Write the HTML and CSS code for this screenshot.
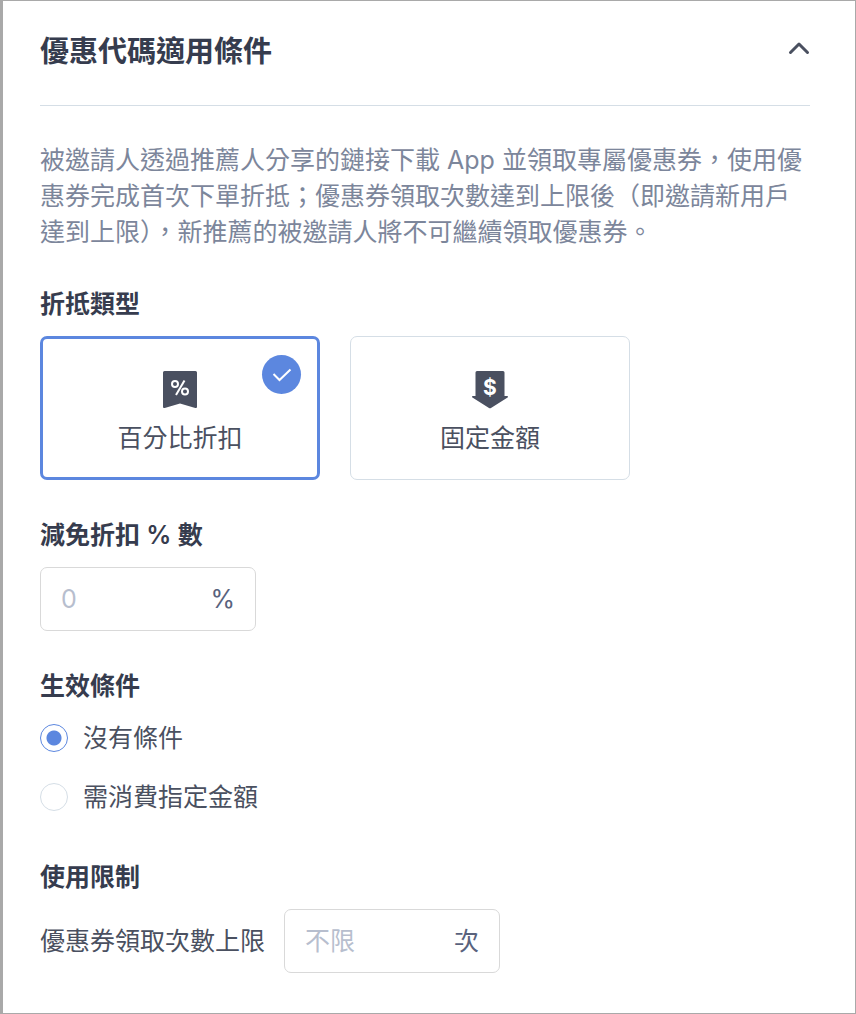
FILE: index.html
```html
<!DOCTYPE html>
<html lang="zh-Hant">
<head>
    <meta charset="UTF-8">
    <meta name="viewport" content="width=device-width, initial-scale=1.0">
    <title>優惠代碼適用條件</title>
    <link rel="stylesheet" href="styles.css">
</head>
<body>
    <main class="panel">
        <header class="panel-header">
            <h1>優惠代碼適用條件</h1>
            <button type="button" class="collapse-button" aria-label="收起" aria-expanded="true">
                <svg width="22" height="14" viewBox="0 0 22 14" fill="none" stroke="currentColor" stroke-width="3" stroke-linecap="round" stroke-linejoin="round">
                    <path d="M2.5 11.5 11 3l8.500 8.500"/>
                </svg>
            </button>
        </header>

        <p class="description">被邀請人透過推薦人分享的鏈接下載 App 並領取專屬優惠券，使用優惠券完成首次下單折抵；優惠券領取次數達到上限後（即邀請新用戶達到上限），新推薦的被邀請人將不可繼續領取優惠券。</p>

        <!-- 折抵類型 -->
        <section class="form-section">
            <h2>折抵類型</h2>
            <div class="type-list">
                <button type="button" class="type-card selected" aria-pressed="true">
                    <svg width="36" height="38" viewBox="0 0 36 38">
                        <path class="icon-shape" d="M2.500 0h31A1.500 1.500 0 0 1 35 1.500v34.300c0 1-.8 1.500-1.700 1.200L18 32.500 2.700 37c-.9.300-1.700-.2-1.700-1.200V1.500A1.500 1.500 0 0 1 2.500 0z"/>
                        <g class="icon-line">
                            <circle cx="13" cy="13" r="3"/>
                            <circle cx="23" cy="20.500" r="3"/>
                            <path d="M22.500 9.500 14 24"/>
                        </g>
                    </svg>
                    <span>百分比折扣</span>
                    <span class="check-badge">
                        <svg width="20" height="14" viewBox="0 0 20 14" fill="none" stroke="currentColor" stroke-width="2">
                            <path d="M1.500 6 7.500 12 18.500 1.500"/>
                        </svg>
                    </span>
                </button>
                <button type="button" class="type-card" aria-pressed="false">
                    <svg width="36" height="38" viewBox="0 0 36 38">
                        <path class="icon-shape" d="M5 0h26a1.500 1.500 0 0 1 1.500 1.500V25h2.700c.8 0 1.100 1 .4 1.500L19 37c-.6.400-1.400.4-2 0L.4 26.500C-.3 26 0 25 .8 25h2.700V1.500A1.500 1.500 0 0 1 5 0z"/>
                        <text class="icon-text" x="18" y="24" text-anchor="middle">$</text>
                    </svg>
                    <span>固定金額</span>
                </button>
            </div>
        </section>

        <!-- 減免折扣 -->
        <section class="form-section">
            <h2><label for="discountInput">減免折扣 % 數</label></h2>
            <div class="input-box">
                <input type="text" id="discountInput" placeholder="0">
                <span>%</span>
            </div>
        </section>

        <!-- 生效條件 -->
        <section class="form-section">
            <h2>生效條件</h2>
            <div class="radio-list">
                <label class="radio-row">
                    <input type="radio" name="condition" value="none" checked>
                    <span>沒有條件</span>
                </label>
                <label class="radio-row">
                    <input type="radio" name="condition" value="amount">
                    <span>需消費指定金額</span>
                </label>
            </div>
        </section>

        <!-- 使用限制 -->
        <section class="form-section">
            <h2>使用限制</h2>
            <div class="limit-row">
                <label for="limitInput">優惠券領取次數上限</label>
                <div class="input-box">
                    <input type="text" id="limitInput" placeholder="不限">
                    <span>次</span>
                </div>
            </div>
        </section>
    </main>
</body>
</html>
```
FILE: styles.css
```css
* {
    box-sizing: border-box;
}
body {
    margin: 0;
    background-color: #fff;
    color: #4a5060;
    font-family: Inter, "Noto Sans CJK TC", sans-serif;
    font-size: 25px;
    line-height: 30px;
}
button, input {
    font: inherit;
    color: inherit;
}
h1, h2, p {
    margin: 0;
}
.panel {
    min-height: 100vh;
    padding: 0 45px 39px 37px;
    border: 1px solid #a9a9a9;
    border-left-width: 3px;
}
.panel-header {
    display: flex;
    align-items: flex-start;
    justify-content: space-between;
    padding: 31px 0 33px;
    border-bottom: 1px solid #d5dee6;
}
h1 {
    color: #363c4e;
    font-size: 29px;
    font-weight: 600;
    line-height: 40px;
}
h2 {
    margin-bottom: 17px;
    color: #363c4e;
    font-size: 25px;
    font-weight: 600;
}
.collapse-button {
    display: flex;
    padding: 9px 0;
    border: none;
    background: none;
    cursor: pointer;
}
.description {
    margin: 36px 0 39px;
    color: #7c869b;
    line-height: 36px;
}
.form-section {
    margin-bottom: 40px;
}
.form-section:last-child {
    margin-bottom: 0;
}
.type-list {
    display: grid;
    grid-template-columns: repeat(2, minmax(0, 280px));
    gap: 30px;
}
.type-card {
    position: relative;
    display: flex;
    flex-direction: column;
    align-items: center;
    justify-content: center;
    gap: 14px;
    height: 144px;
    padding: 7px 0 0;
    border: 1px solid #d5dee6;
    border-radius: 7px;
    background-color: #fff;
    cursor: pointer;
}
.type-card.selected {
    border: 3px solid #5c87df;
}
.icon-shape {
    fill: #4a5060;
}
.icon-line {
    fill: none;
    stroke: #fff;
    stroke-width: 2;
}
.icon-text {
    fill: #fff;
    font-size: 21px;
    font-weight: 700;
}
.check-badge {
    position: absolute;
    top: 16px;
    right: 16px;
    display: flex;
    align-items: center;
    justify-content: center;
    width: 39px;
    height: 39px;
    border-radius: 50%;
    background-color: #5c87df;
    color: #fff;
}
.input-box {
    display: flex;
    align-items: center;
    width: 216px;
    height: 64px;
    padding: 0 20px;
    border: 1px solid #d9d9d9;
    border-radius: 7px;
    color: #59627d;
}
.input-box input {
    flex: 1;
    min-width: 0;
    padding: 0;
    border: none;
    outline: none;
    background: none;
}
.input-box input::placeholder {
    color: #b7bece;
    opacity: 1;
}
.radio-list {
    display: flex;
    flex-direction: column;
    gap: 19px;
    padding-bottom: 5px;
}
.radio-row {
    display: flex;
    align-items: center;
    gap: 15px;
    height: 40px;
}
.radio-row input {
    width: 28px;
    height: 28px;
    margin: 0;
    border: 1px solid #d5dee6;
    border-radius: 50%;
    appearance: none;
}
.radio-row input:checked {
    border-color: #5c87df;
    background: radial-gradient(circle, #5c87df 7px, transparent 8px);
}
.limit-row {
    display: flex;
    align-items: center;
    gap: 19px;
}
```
